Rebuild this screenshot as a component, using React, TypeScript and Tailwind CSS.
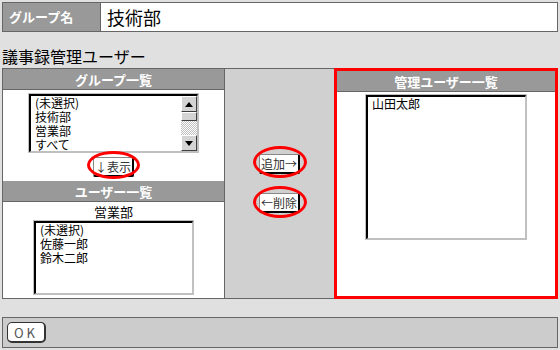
import React from "react";

const F = { fontFamily: '"Noto Sans CJK JP", "Noto Sans", sans-serif' };

function Bevel({ children, className = "" }: { children?: React.ReactNode; className?: string }) {
  return (
    <div className={"border border-t-white border-l-white border-r-[#404040] border-b-[#404040] bg-[#d4d4d4] " + className}>
      {children}
    </div>
  );
}

function Btn({ label, className = "" }: { label: string; className?: string }) {
  return (
    <div className={"h-[20px] bg-white border border-[#888] border-r-2 border-b-2 border-r-black border-b-black rounded-[2px] flex items-center justify-center text-[12px] leading-none text-[#333] whitespace-nowrap " + className}>
      {label}
    </div>
  );
}

function Ellipse({ className }: { className: string }) {
  return <div className={"absolute border-[3px] border-[#ff0000] rounded-[50%] pointer-events-none " + className} />;
}

function Header({ label }: { label: string }) {
  return (
    <div className="h-[21px] bg-[#999999] border-b border-[#666] flex items-center justify-center text-white font-bold text-[13px] leading-none">
      {label}
    </div>
  );
}

function ListBox({ items, w, h, scroll }: { items: string[]; w: string; h: string; scroll?: boolean }) {
  return (
    <div className={"border border-[#c0c0c0] bg-white " + w + " " + h}>
      <div className="w-full h-full border-t-2 border-l-2 border-t-black border-l-black border-r border-b border-r-[#c0c0c0] border-b-[#c0c0c0] flex overflow-hidden">
        <div className="flex-1 pl-[4px] text-[12px] leading-[14px] text-black">
          {items.map((t) => (
            <div key={t} className="h-[14px] whitespace-nowrap">{t}</div>
          ))}
        </div>
        {scroll && (
          <div className="w-[16px] h-full flex flex-col">
            <Bevel className="h-[16px] flex items-center justify-center">
              <svg width="8" height="5" viewBox="0 0 8 5"><path d="M4 0L8 5H0Z" fill="#000" /></svg>
            </Bevel>
            <Bevel className="h-[9px]" />
            <div
              className="flex-1"
              style={{
                backgroundImage: "repeating-conic-gradient(#c0c0c0 0% 25%, #ffffff 0% 50%)",
                backgroundSize: "2px 2px",
              }}
            />
            <Bevel className="h-[16px] flex items-center justify-center">
              <svg width="8" height="5" viewBox="0 0 8 5"><path d="M0 0H8L4 5Z" fill="#000" /></svg>
            </Bevel>
          </div>
        )}
      </div>
    </div>
  );
}

export default function App() {
  return (
    <div className="w-[560px] h-[350px] bg-[#e0e0e0] relative overflow-hidden" style={F}>
      <div className="pt-[2px] pl-[2px]">
        <div className="w-[556px] h-[30px] border border-[#666] flex">
          <div className="w-[98px] bg-[#999999] border-r border-[#666] flex items-center pl-[6px] text-white font-bold text-[13px]">
            グループ名
          </div>
          <div className="flex-1 bg-white flex items-center pl-[6px] text-[18px] leading-none text-black">技術部</div>
        </div>

        <div className="mt-[16px] h-[20px] text-[16px] leading-none text-black">議事録管理ユーザー</div>

        <div className="w-[556px] h-[231px] flex">
          <div className="w-[223px] h-full border border-[#666] bg-white flex flex-col">
            <Header label="グループ一覧" />
            <div className="flex flex-col items-center pt-[3px]">
              <ListBox items={["(未選択)", "技術部", "営業部", "すべて"]} w="w-[171px]" h="h-[60px]" scroll />
              <Btn label="↓表示" className="w-[41px] mt-[4px]" />
            </div>
            <div className="mt-[4px]">
              <Header label="ユーザー一覧" />
            </div>
            <div className="flex flex-col items-center">
              <div className="h-[18px] pt-[3px] text-[13px] leading-[14px] text-black">営業部</div>
              <ListBox items={["(未選択)", "佐藤一郎", "鈴木二郎"]} w="w-[161px]" h="h-[75px]" />
            </div>
          </div>

          <div className="w-[109px] h-full border-t border-b border-[#666] bg-[#d0d0d0] flex flex-col items-center justify-center gap-[19px]">
            <Btn label="追加→" className="w-[41px]" />
            <Btn label="←削除" className="w-[41px]" />
          </div>

          <div className="flex-1 h-full border-[3px] border-[#ff0000] bg-white flex flex-col">
            <Header label="管理ユーザー一覧" />
            <div className="flex justify-center pt-[2px]">
              <ListBox items={["山田太郎"]} w="w-[162px]" h="h-[146px]" />
            </div>
          </div>
        </div>

        <div className="mt-[18px] w-[556px] h-[31px] border border-[#666] bg-[#cccccc] flex items-center pl-[4px]">
          <div className="w-[39px] h-[21px] bg-white border border-[#333] border-r-2 border-b-2 rounded-[5px] flex items-center justify-center text-[13px] text-[#555] tracking-[3px] leading-none">
            OK
          </div>
        </div>
      </div>

      <Ellipse className="left-[87px] top-[151px] w-[53px] h-[28px]" />
      <Ellipse className="left-[253px] top-[146px] w-[54px] h-[32px]" />
      <Ellipse className="left-[253px] top-[186px] w-[54px] h-[32px]" />
    </div>
  );
}
